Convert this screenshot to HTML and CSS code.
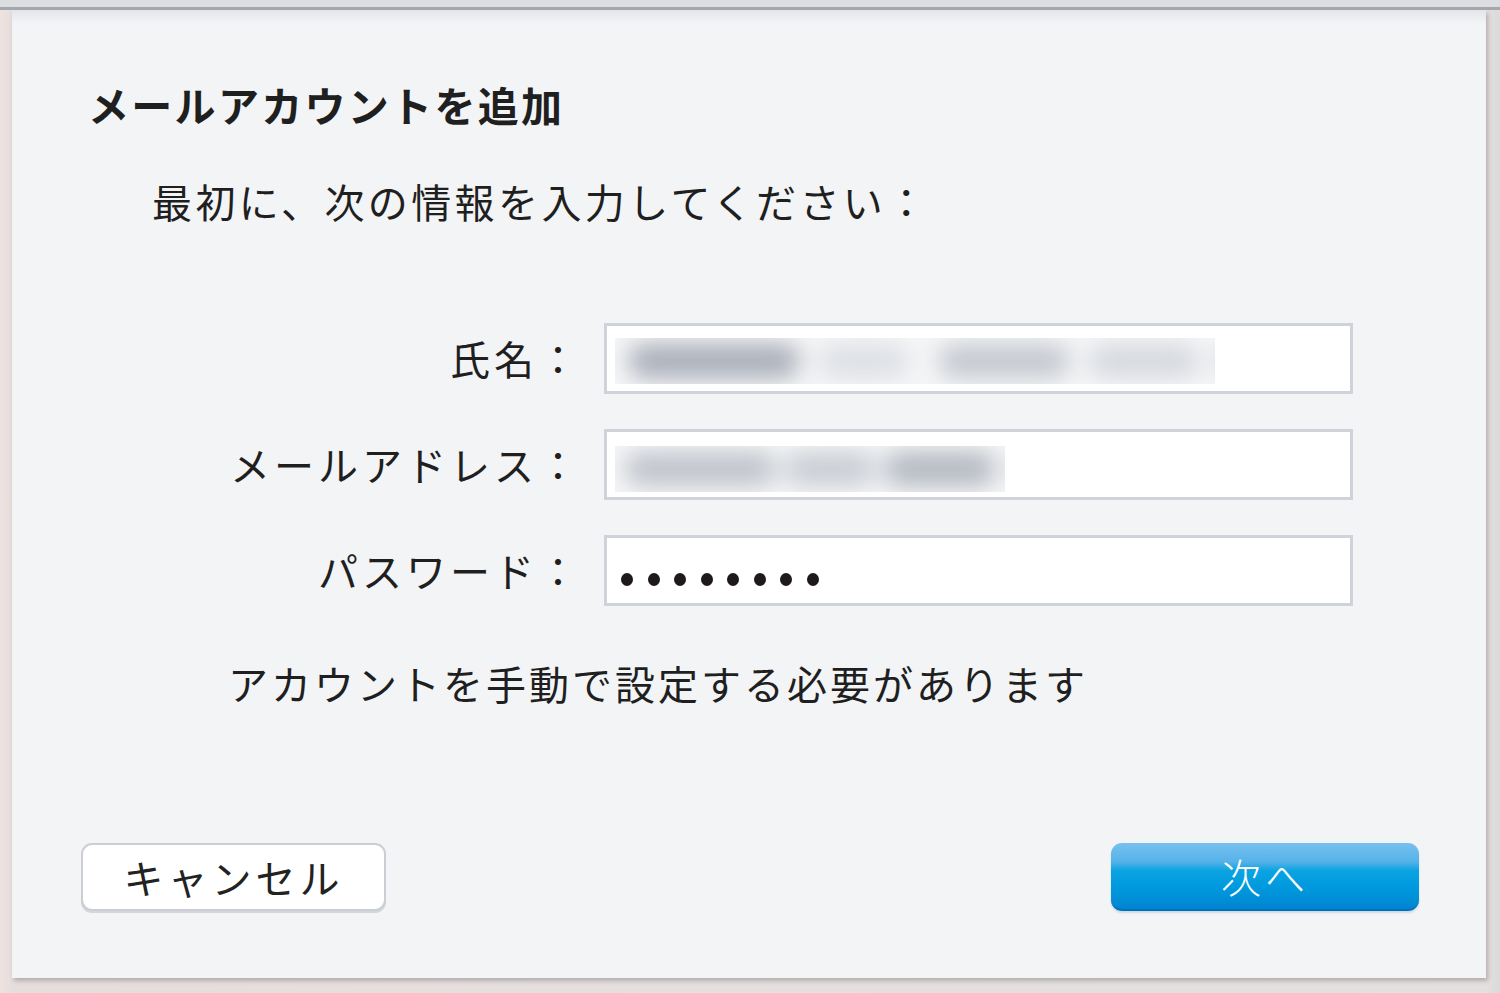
FILE: index.html
```html
<!DOCTYPE html>
<html lang="ja">
<head>
<meta charset="utf-8">
<title>メールアカウントを追加</title>
<link rel="stylesheet" href="styles.css">
</head>
<body>
<div class="topband"></div>
<div class="stage">
  <div class="dialog">
    <h1 class="title">メールアカウントを追加</h1>
    <p class="subtitle">最初に、次の情報を入力してください：</p>
    <div class="form">
      <div class="label">氏名：</div>
      <div class="field">
        <div class="blurbox name-box">
          <div class="blurs">
            <span class="blob b1"></span>
            <span class="blob b2"></span>
            <span class="blob b3"></span>
            <span class="blob b4"></span>
            <span class="blob b5"></span>
          </div>
        </div>
      </div>
      <div class="label">メールアドレス：</div>
      <div class="field">
        <div class="blurbox mail-box">
          <div class="blurs">
            <span class="blob e1"></span>
            <span class="blob e2"></span>
            <span class="blob e3"></span>
            <span class="blob e4"></span>
          </div>
        </div>
      </div>
      <div class="label">パスワード：</div>
      <div class="field pw">
        <span class="dot"></span><span class="dot"></span><span class="dot"></span><span class="dot"></span><span class="dot"></span><span class="dot"></span><span class="dot"></span><span class="dot"></span>
      </div>
    </div>
    <p class="message">アカウントを手動で設定する必要があります</p>
    <div class="buttons">
      <button class="btn cancel">キャンセル</button>
      <button class="btn next">次へ</button>
    </div>
  </div>
</div>
</body>
</html>
```
FILE: styles.css
```css
html, body {
  margin: 0;
  padding: 0;
}
body {
  width: 1500px;
  height: 993px;
  overflow: hidden;
  background: linear-gradient(90deg, #ede3e0 0px, #e6dedd 12px, #e4e0e0 1486px, #dcd9da 1500px);
  font-family: "Noto Sans CJK JP", "Noto Sans", sans-serif;
  color: #1f1f1f;
}
.topband {
  height: 7px;
  background: #dcdde1;
  border-bottom: 3px solid #a4a8ad;
}
.stage {
  padding-left: 12px;
}
.dialog {
  width: 1474px;
  height: 968px;
  box-sizing: border-box;
  background: linear-gradient(180deg, #e2e4e8 0px, #eceef1 8px, #f3f4f6 14px, #f3f4f6 100%);
  box-shadow: 2px 3px 4px rgba(60, 50, 55, 0.28);
  padding-top: 70px;
  display: flex;
  flex-direction: column;
}
.title {
  margin: 0 0 0 76px;
  font-size: 41px;
  line-height: 48px;
  font-weight: 700;
  letter-spacing: 2.3px;
}
.subtitle {
  margin: 49px 0 0 140px;
  font-size: 40px;
  line-height: 48px;
  font-weight: 400;
  letter-spacing: 3.4px;
}
.form {
  margin-top: 98px;
  display: grid;
  grid-template-columns: 570px 749px;
  column-gap: 22px;
  row-gap: 35px;
}
.label {
  text-align: right;
  font-size: 40px;
  line-height: 71px;
  letter-spacing: 4px;
}
.field {
  height: 71px;
  box-sizing: border-box;
  background: #ffffff;
  border: 3px solid #cfd2d8;
  display: flex;
  align-items: center;
  padding-left: 8px;
  overflow: hidden;
}
.blurbox {
  height: 46px;
  background: #f6f7f8;
  overflow: hidden;
  display: flex;
  align-items: center;
}
.name-box { width: 600px; margin-top: 4px; }
.mail-box { width: 390px; margin-top: 8px; }
.blurs {
  display: flex;
  align-items: center;
  height: 46px;
  filter: blur(12px);
}
.blob {
  display: block;
  height: 34px;
  border-radius: 14px;
  background: #b5bac3;
  flex: none;
}
.b1 { width: 170px; margin-left: 14px; background: #a7acb7; }
.b2 { width: 90px; margin-left: 20px; background: #dcdfe4; }
.b3 { width: 130px; margin-left: 30px; background: #c3c7ce; }
.b4 { width: 110px; margin-left: 20px; background: #d5d8de; }
.b5 { width: 70px; margin-left: 20px; background: #cdd0d6; }
.e1 { width: 150px; margin-left: 10px; background: #bec2ca; }
.e2 { width: 90px; margin-left: 10px; background: #c8ccd3; }
.e3 { width: 110px; margin-left: 10px; background: #b2b7c0; }
.e4 { width: 70px; margin-left: 20px; background: #c4c8cf; }
.pw {
  padding-left: 14px;
  padding-top: 17px;
  gap: 14.5px;
}
.dot {
  width: 12px;
  height: 13px;
  border-radius: 50%;
  background: #1e1a1a;
  flex: none;
}
.message {
  margin: 53px 0 0 216px;
  font-size: 40px;
  line-height: 48px;
  letter-spacing: 3px;
}
.buttons {
  margin-top: 136px;
  padding: 0 67px 0 69px;
  display: flex;
  justify-content: space-between;
}
.btn {
  height: 68px;
  border-radius: 11px;
  font-family: "Noto Sans CJK JP", "Noto Sans", sans-serif;
  font-size: 40px;
  line-height: 1;
  letter-spacing: 4px;
  padding: 0;
  cursor: default;
}
.cancel {
  width: 305px;
  background: #ffffff;
  border: 2px solid #cbced5;
  box-shadow: 0 2px 0 rgba(180, 183, 192, 0.5);
  color: #222222;
}
.next {
  width: 308px;
  border: none;
  border-bottom: 2px solid #0070bf;
  background: linear-gradient(180deg, #78c0ee 0%, #56b3e9 28%, #0aa3e2 42%, #0098dd 70%, #0085d0 100%);
  color: #ffffff;
  font-weight: 300;
  box-shadow: 0 2px 2px rgba(0, 60, 120, 0.15);
}
```
